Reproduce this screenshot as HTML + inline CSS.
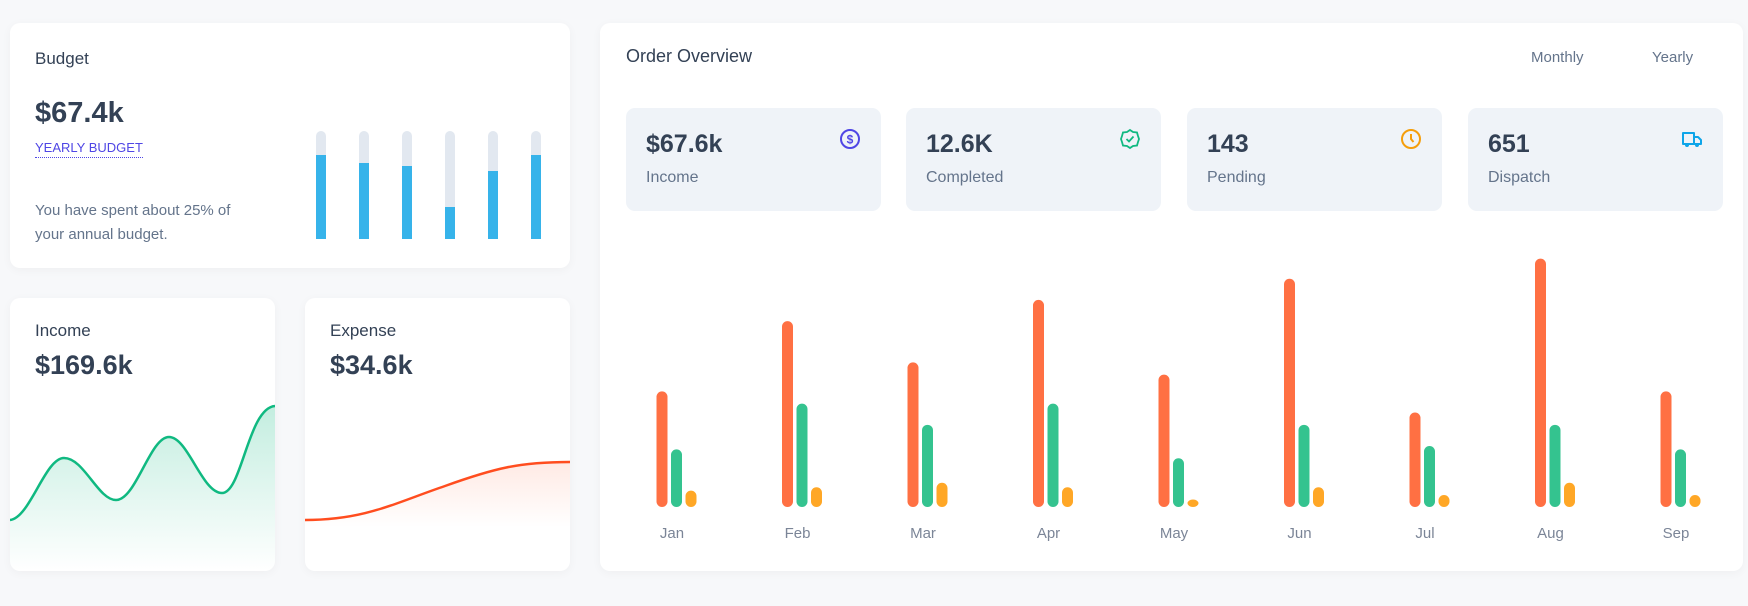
<!DOCTYPE html>
<html><head><meta charset="utf-8"><style>
*{margin:0;padding:0;box-sizing:border-box}
body{width:1748px;height:606px;background:#f7f8fa;font-family:"Liberation Sans",sans-serif;position:relative;overflow:hidden;color:#334155}
.card{position:absolute;background:#fff;border-radius:10px;box-shadow:0 2px 10px rgba(0,0,0,.04)}
.abs{position:absolute;white-space:nowrap}
.t{font-size:17px;color:#334155}
.v{font-size:29px;font-weight:bold;color:#334155}
.stat{position:absolute;top:108px;width:255px;height:103px;background:#eff3f8;border-radius:9px}
.stat .n{position:absolute;left:20px;top:22px;font-size:25px;font-weight:bold;color:#334155}
.stat .l{position:absolute;left:20px;top:61px;font-size:16px;color:#64748b}
.stat svg{position:absolute;right:20px;top:20px}
.lab{position:absolute;top:525px;font-size:15px;color:#7b8597;width:60px;text-align:center}
</style></head><body>
<div class="card" style="left:10px;top:23px;width:560px;height:245px">
 <div class="abs t" style="left:25px;top:26px">Budget</div>
 <div class="abs v" style="left:25px;top:74px">$67.4k</div>
 <div class="abs" style="left:25px;top:117px;font-size:13px;color:#4f46e5;border-bottom:1px dotted #4f46e5;padding-bottom:2px">YEARLY BUDGET</div>
 <div class="abs" style="left:25px;top:176px;font-size:15px;color:#64748b;line-height:24px;white-space:normal;width:212px">You have spent about 25% of your annual budget.</div>
</div>
<svg class="abs" style="left:0;top:0" width="600" height="260">
 <g fill="#e2e8f0"><rect x="316" y="131" width="10" height="108" rx="5"/><rect x="359" y="131" width="10" height="108" rx="5"/><rect x="402" y="131" width="10" height="108" rx="5"/><rect x="445" y="131" width="10" height="108" rx="5"/><rect x="488" y="131" width="10" height="108" rx="5"/><rect x="531" y="131" width="10" height="108" rx="5"/></g>
 <g fill="#36b3ea"><rect x="316" y="155" width="10" height="84"/><rect x="359" y="163" width="10" height="76"/><rect x="402" y="166" width="10" height="73"/><rect x="445" y="207" width="10" height="32"/><rect x="488" y="171" width="10" height="68"/><rect x="531" y="155" width="10" height="84"/></g>
</svg>
<div class="card" style="left:10px;top:298px;width:265px;height:273px;overflow:hidden">
 <div class="abs t" style="left:25px;top:23px">Income</div>
 <div class="abs v" style="left:25px;top:52px;font-size:27px">$169.6k</div>
 <svg class="abs" style="left:0;top:0" width="265" height="273">
  <defs><linearGradient id="g1" x1="0" y1="0" x2="0" y2="1"><stop offset="0" stop-color="#10b981" stop-opacity=".25"/><stop offset="1" stop-color="#10b981" stop-opacity="0"/></linearGradient>
  <linearGradient id="g2" x1="0" y1="0" x2="0" y2="1"><stop offset="0" stop-color="#ff4d1f" stop-opacity=".12"/><stop offset=".6" stop-color="#ff4d1f" stop-opacity="0"/></linearGradient></defs>
  <path d="M0 222 C20 220 35 160 54 160 C74 160 88 202 106 202 C126 202 140 139 159 139 C178 139 192 195 212 195 C232 195 238 110 265 108 L265 273 L0 273Z" fill="url(#g1)"/>
  <path d="M0 222 C20 220 35 160 54 160 C74 160 88 202 106 202 C126 202 140 139 159 139 C178 139 192 195 212 195 C232 195 238 110 265 108" fill="none" stroke="#10b981" stroke-width="2.5"/>
 </svg>
</div>
<div class="card" style="left:305px;top:298px;width:265px;height:273px;overflow:hidden">
 <div class="abs t" style="left:25px;top:23px">Expense</div>
 <div class="abs v" style="left:25px;top:52px;font-size:27px">$34.6k</div>
 <svg class="abs" style="left:0;top:0" width="265" height="273">
  <path d="M0 222 C60 222 90 205 140 188 C190 170 215 164 265 164 L265 273 L0 273Z" fill="url(#g2)"/>
  <path d="M0 222 C60 222 90 205 140 188 C190 170 215 164 265 164" fill="none" stroke="#ff4d1f" stroke-width="2.5"/>
 </svg>
</div>
<div class="card" style="left:600px;top:23px;width:1143px;height:548px"></div>
<div class="abs" style="left:626px;top:46px;font-size:18px;color:#334155">Order Overview</div>
<div class="abs" style="left:1531px;top:49px;font-size:15px;color:#64748b">Monthly</div>
<div class="abs" style="left:1652px;top:49px;font-size:15px;color:#64748b">Yearly</div>
<div class="stat" style="left:626px"><div class="n">$67.6k</div><div class="l">Income</div>
<svg width="22" height="22" viewBox="0 0 22 22"><circle cx="11" cy="11" r="9" fill="none" stroke="#4f46e5" stroke-width="2"/><text x="11" y="15.5" font-size="12" font-weight="bold" text-anchor="middle" fill="#4f46e5" font-family="Liberation Sans">$</text></svg></div>
<div class="stat" style="left:906px"><div class="n">12.6K</div><div class="l">Completed</div>
<svg width="22" height="22" viewBox="0 0 22 22"><path d="M11 2 L14 4 L18 4.5 L19 8 L20 11 L19 14 L18 17.5 L14 18 L11 20 L8 18 L4 17.5 L3 14 L2 11 L3 8 L4 4.5 L8 4Z" fill="none" stroke="#10b981" stroke-width="1.8"/><path d="M7.5 11 L10 13.5 L14.5 8.5" fill="none" stroke="#10b981" stroke-width="1.8"/></svg></div>
<div class="stat" style="left:1187px"><div class="n">143</div><div class="l">Pending</div>
<svg width="22" height="22" viewBox="0 0 22 22"><circle cx="11" cy="11" r="9" fill="none" stroke="#f59e0b" stroke-width="2"/><path d="M11 6 V11 L13.5 14" fill="none" stroke="#f59e0b" stroke-width="2"/></svg></div>
<div class="stat" style="left:1468px"><div class="n">651</div><div class="l">Dispatch</div>
<svg width="22" height="22" viewBox="0 0 22 22"><path d="M2 5 H13 V16 H2Z M13 9 H17 L20 12 V16 H13Z" fill="none" stroke="#0ea5e9" stroke-width="2" stroke-linejoin="round"/><circle cx="6" cy="17" r="2" fill="#0ea5e9"/><circle cx="16" cy="17" r="2" fill="#0ea5e9"/></svg></div>
<svg class="abs" style="left:0;top:0" width="1748" height="606">
<g id="bars"></g>
</svg>
<script>
var tops=[[351,403,440],[288,362,437],[325,381,433],[269,362,437],[336,411,448],[250,381,437],[370,400,444],[232,381,433],[351,403,444]];
var cols=["#ff7043","#34c38f","#ffa726"];
var s="";var labs=["Jan","Feb","Mar","Apr","May","Jun","Jul","Aug","Sep"];var h="";
for(var i=0;i<9;i++){var c=672+i*125.5;for(var j=0;j<3;j++){var x=c-15.5+j*14.5;var t=tops[i][j]*1.115;s+='<rect x="'+x+'" y="'+t+'" width="11" height="'+(507-t)+'" rx="5.5" fill="'+cols[j]+'"/>';}
h+='<div class="lab" style="left:'+(c-30)+'px">'+labs[i]+'</div>';}
document.getElementById("bars").innerHTML=s;document.body.insertAdjacentHTML("beforeend",h);
</script>
</body></html>
